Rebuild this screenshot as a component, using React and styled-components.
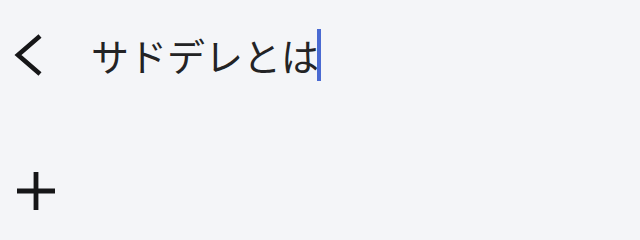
import React from "react";
import styled, { createGlobalStyle } from "styled-components";

const Global = createGlobalStyle`
  html, body { margin: 0; padding: 0; background: #f4f5f8; }
  body { font-family: "Noto Sans CJK JP", "Noto Sans", sans-serif; }
`;

const Page = styled.div`
  width: 640px;
  height: 240px;
  background: #f4f5f8;
  display: flex;
  flex-direction: column;
`;

const Header = styled.div`
  display: flex;
  align-items: center;
  height: 56px;
  margin-top: 27px;
  padding-left: 13px;
`;

const IconButton = styled.button`
  border: none;
  background: none;
  padding: 0;
  display: flex;
  align-items: center;
  justify-content: center;
  color: #161618;
  width: ${(p) => p.$w}px;
  height: ${(p) => p.$h}px;
`;

const SearchText = styled.div`
  margin-left: 48px;
  display: flex;
  align-items: center;
  font-size: 38px;
  color: #232325;
  line-height: 1;
  letter-spacing: 0;
`;

const Caret = styled.span`
  display: inline-block;
  width: 4px;
  height: 52px;
  background: #4a6ad2;
  margin-left: -2px;
`;

const Actions = styled.div`
  display: flex;
  padding-left: 15px;
  margin-top: 87px;
`;

export default function App() {
  return (
    <>
      <Global />
      <Page>
        <Header>
          <IconButton $w={30} $h={44}>
            <svg width="30" height="44" viewBox="0 0 30 44">
              <path d="M27 3 L5 22 L27 41" fill="none" stroke="currentColor" strokeWidth="4.6" strokeLinejoin="miter" />
            </svg>
          </IconButton>
          <SearchText>
            サドデレとは
            <Caret />
          </SearchText>
        </Header>
        <Actions>
          <IconButton $w={42} $h={42}>
            <svg width="42" height="42" viewBox="0 0 42 42">
              <path d="M21 2 V40 M2 21 H40" fill="none" stroke="currentColor" strokeWidth="4.8" />
            </svg>
          </IconButton>
        </Actions>
      </Page>
    </>
  );
}
